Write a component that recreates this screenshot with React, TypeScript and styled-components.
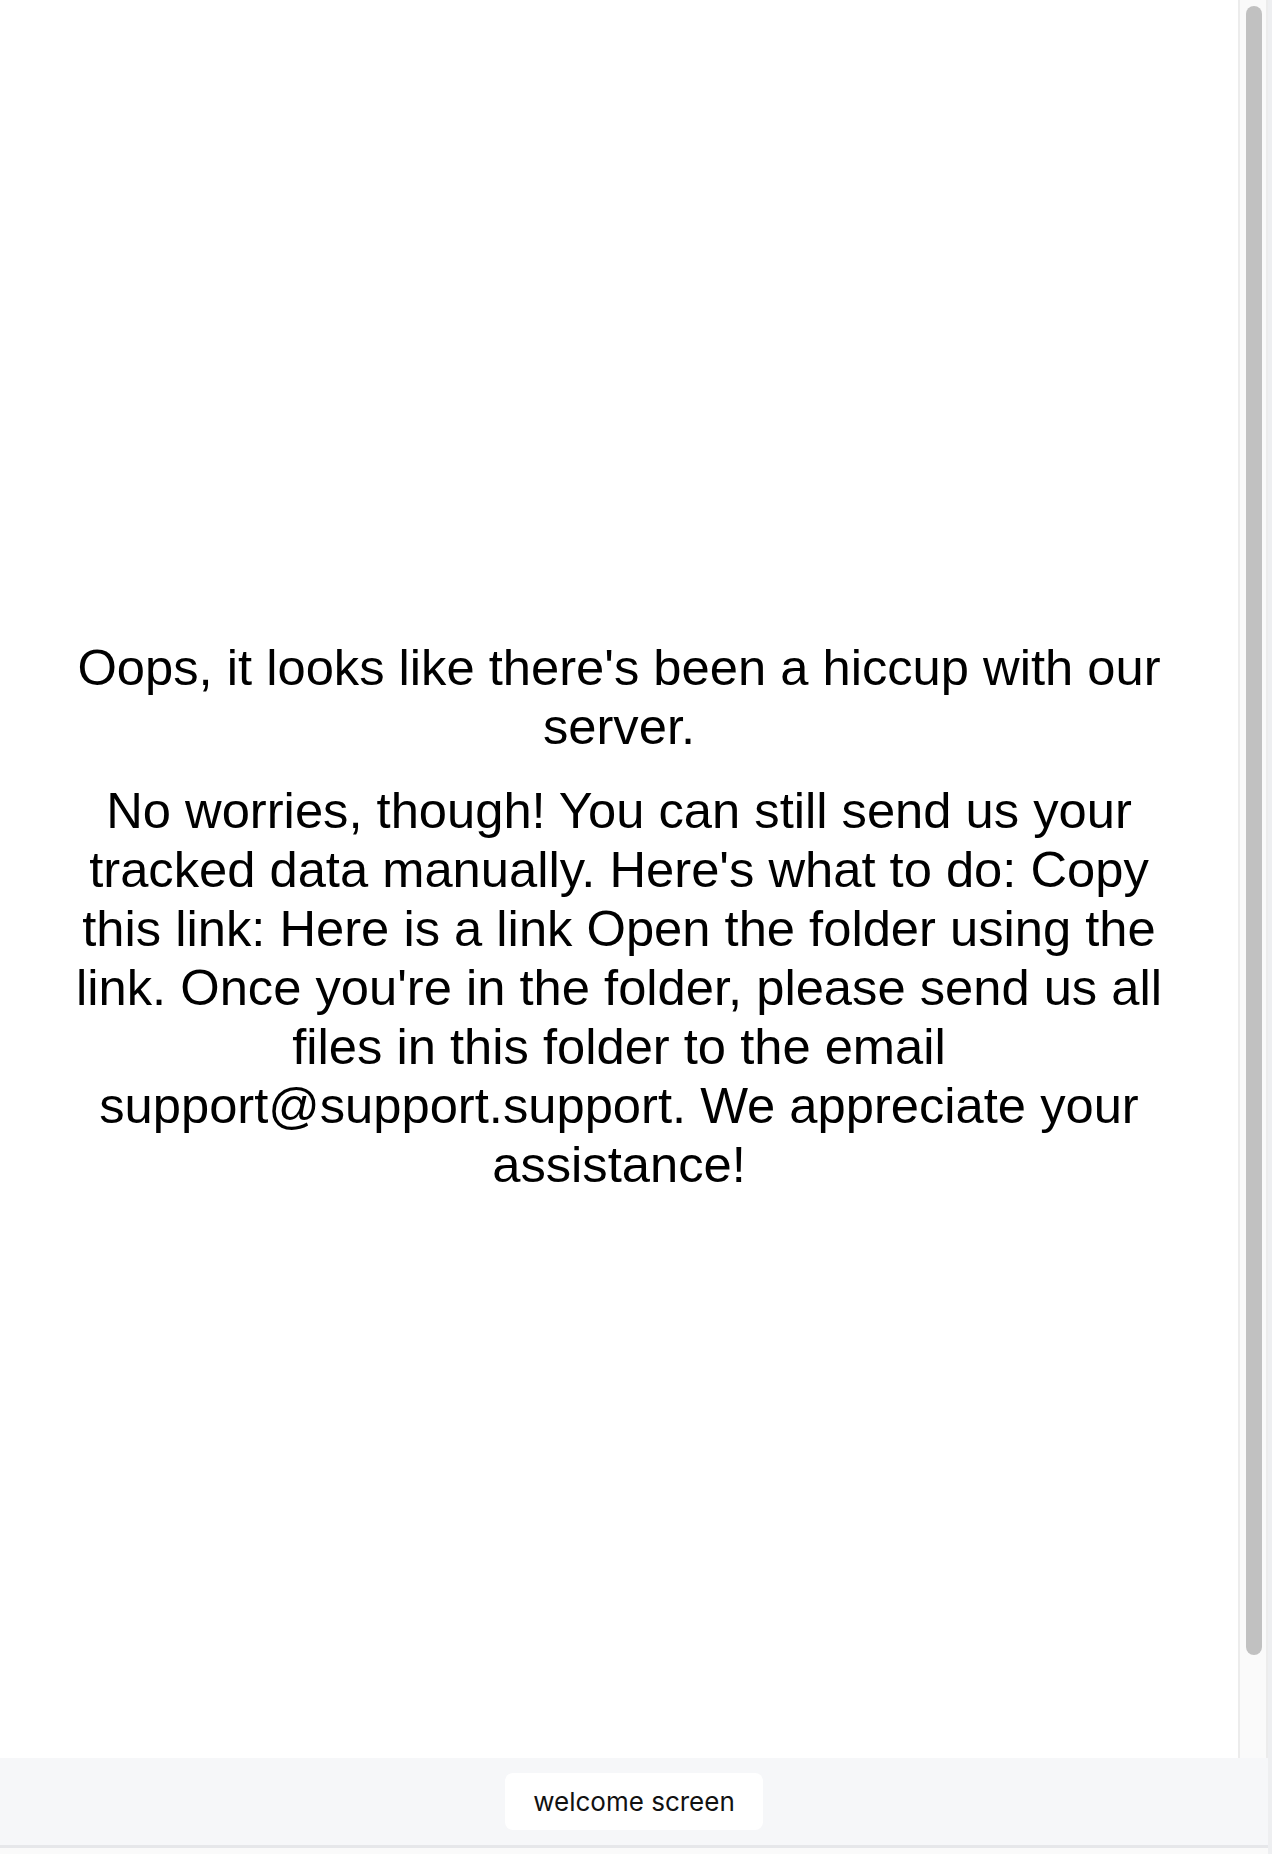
import React from "react";
import styled, { createGlobalStyle } from "styled-components";

const GlobalStyle = createGlobalStyle`
  html, body {
    margin: 0;
    padding: 0;
    height: 100%;
    overflow: hidden;
    background: #fafafa;
  }
  #root {
    height: 100%;
  }
  * {
    box-sizing: border-box;
  }
`;

const Shell = styled.div`
  height: 100vh;
  width: 100%;
  display: flex;
  flex-direction: column;
  padding-bottom: 6px;
  border-right: 4px solid #eeeff1;
  background: #fafafa;
`;

const Viewport = styled.div`
  flex: 1;
  min-height: 0;
  display: flex;
  background: #ffffff;
  overflow: hidden;
`;

const Content = styled.main`
  flex: 1;
  min-width: 0;
  display: flex;
  flex-direction: column;
  justify-content: center;
  padding: 74px 64px 0;
`;

const Message = styled.p<{ $gap?: boolean }>`
  margin: 0 0 ${(p) => (p.$gap ? "25px" : "0")};
  text-align: center;
  font-family: "Liberation Sans", Helvetica, Arial, sans-serif;
  font-size: 50.7px;
  line-height: 59px;
  color: #000000;
`;

const ScrollTrack = styled.aside`
  width: 30px;
  flex-shrink: 0;
  background: #fafafa;
  border-left: 2px solid #ececec;
  border-right: 2px solid #ececec;
  padding: 6px 4px 0 6px;
`;

const ScrollThumb = styled.div`
  width: 16px;
  height: 1649px;
  border-radius: 8px;
  background: #c1c1c1;
`;

const Footer = styled.footer`
  height: 90px;
  flex-shrink: 0;
  display: flex;
  align-items: center;
  justify-content: center;
  background: #f6f7f9;
  border-bottom: 3px solid #e6e7ea;
`;

const NavButton = styled.button`
  height: 57px;
  padding: 0 28px;
  border: none;
  border-radius: 8px;
  background: #ffffff;
  color: #111111;
  font-family: Inter, "Noto Sans", sans-serif;
  font-size: 26px;
  cursor: pointer;
`;

export default function App() {
  return (
    <>
      <GlobalStyle />
      <Shell>
        <Viewport>
          <Content>
            <Message $gap>Oops, it looks like there's been a hiccup with our server.</Message>
            <Message>
              No worries, though! You can still send us your tracked data manually. Here's what to do:
              Copy this link: Here is a link Open the folder using the link. Once you're in the folder,
              please send us all files in this folder to the email support@support.support. We
              appreciate your assistance!
            </Message>
          </Content>
          <ScrollTrack>
            <ScrollThumb />
          </ScrollTrack>
        </Viewport>
        <Footer>
          <NavButton>welcome screen</NavButton>
        </Footer>
      </Shell>
    </>
  );
}
